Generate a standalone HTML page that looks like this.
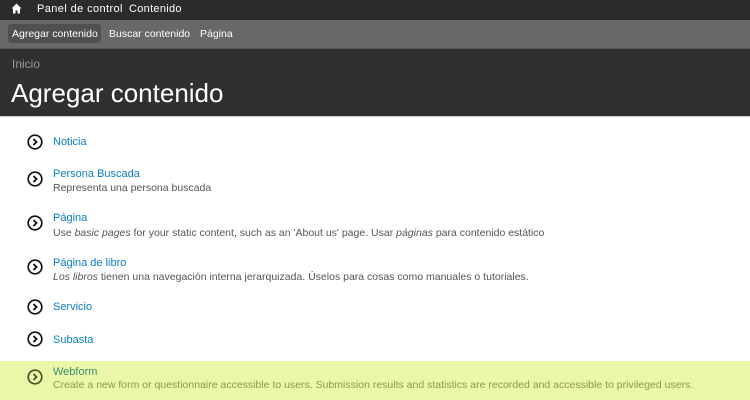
<!DOCTYPE html>
<html><head><meta charset="utf-8"><style>
body{margin:0;width:750px;height:400px;overflow:hidden;background:#fff;font-family:"Liberation Sans",sans-serif;position:relative}
.a{position:absolute;white-space:nowrap}
.t{font-size:11px;color:#0a7ebf}
.d{font-size:10.5px;color:#555}
svg.i{position:absolute;width:16px;height:16px}
</style></head><body>
<div class="a" style="left:0;top:0;width:750px;height:20px;background:#2b2b2b"></div>
<div class="a" style="left:0;top:20px;width:750px;height:28px;background:#686868;border-bottom:1px solid #555"></div>
<div class="a" style="left:0;top:49px;width:750px;height:67px;background:#303030;border-bottom:1px solid #ccc"></div>
<svg class="a" style="left:11px;top:3px" width="11" height="11" viewBox="0 0 11 11"><path d="M5.5 0.5L0.5 5.5H2V10.5H4.5V7.5H6.5V10.5H9V5.5H10.5Z" fill="#fff"/></svg>
<div class="a" style="left:37px;top:3px;font-size:11px;color:#fff;letter-spacing:0.4px">Panel de control</div>
<div class="a" style="left:129px;top:3px;font-size:11px;color:#fff;letter-spacing:0.3px">Contenido</div>
<div class="a" style="left:8px;top:24px;width:93px;height:19px;background:#505050;border-radius:3px"></div>
<div class="a" style="left:12px;top:28px;font-size:10.5px;color:#fff">Agregar contenido</div>
<div class="a" style="left:109px;top:28px;font-size:10.5px;color:#fff">Buscar contenido</div>
<div class="a" style="left:200px;top:28px;font-size:10.5px;color:#fff">Página</div>
<div class="a" style="left:12px;top:57px;font-size:12px;color:#999">Inicio</div>
<div class="a" style="left:11px;top:78px;font-size:26px;color:#fff">Agregar contenido</div>
<div class="a" style="left:0;top:361px;width:750px;height:39px;background:#eaf6a8"></div>

<svg class="i" style="left:27px;top:134px" viewBox="0 0 16 16"><circle cx="8" cy="8" r="6.8" fill="none" stroke="#111" stroke-width="1.7"/><path d="M6.5 5L9.5 8L6.5 11" fill="none" stroke="#111" stroke-width="1.8"/></svg>
<div class="a t" style="left:53px;top:136px">Noticia</div>

<svg class="i" style="left:27px;top:171px" viewBox="0 0 16 16"><circle cx="8" cy="8" r="6.8" fill="none" stroke="#111" stroke-width="1.7"/><path d="M6.5 5L9.5 8L6.5 11" fill="none" stroke="#111" stroke-width="1.8"/></svg>
<div class="a t" style="left:53px;top:168px">Persona Buscada</div>
<div class="a d" style="left:53px;top:182px">Representa una persona buscada</div>

<svg class="i" style="left:27px;top:215px" viewBox="0 0 16 16"><circle cx="8" cy="8" r="6.8" fill="none" stroke="#111" stroke-width="1.7"/><path d="M6.5 5L9.5 8L6.5 11" fill="none" stroke="#111" stroke-width="1.8"/></svg>
<div class="a t" style="left:53px;top:212px">Página</div>
<div class="a d" style="left:53px;top:227px">Use <i>basic pages</i> for your static content, such as an 'About us' page. Usar <i>páginas</i> para contenido estático</div>

<svg class="i" style="left:27px;top:259px" viewBox="0 0 16 16"><circle cx="8" cy="8" r="6.8" fill="none" stroke="#111" stroke-width="1.7"/><path d="M6.5 5L9.5 8L6.5 11" fill="none" stroke="#111" stroke-width="1.8"/></svg>
<div class="a t" style="left:53px;top:257px">Página de libro</div>
<div class="a d" style="left:53px;top:271px"><i>Los libros</i> tienen una navegación interna jerarquizada. Úselos para cosas como manuales o tutoriales.</div>

<svg class="i" style="left:27px;top:299px" viewBox="0 0 16 16"><circle cx="8" cy="8" r="6.8" fill="none" stroke="#111" stroke-width="1.7"/><path d="M6.5 5L9.5 8L6.5 11" fill="none" stroke="#111" stroke-width="1.8"/></svg>
<div class="a t" style="left:53px;top:301px">Servicio</div>

<svg class="i" style="left:27px;top:331px" viewBox="0 0 16 16"><circle cx="8" cy="8" r="6.8" fill="none" stroke="#111" stroke-width="1.7"/><path d="M6.5 5L9.5 8L6.5 11" fill="none" stroke="#111" stroke-width="1.8"/></svg>
<div class="a t" style="left:53px;top:334px">Subasta</div>

<svg class="i" style="left:27px;top:369px" viewBox="0 0 16 16"><circle cx="8" cy="8" r="6.8" fill="none" stroke="#4a5220" stroke-width="1.7"/><path d="M6.5 5L9.5 8L6.5 11" fill="none" stroke="#4a5220" stroke-width="1.8"/></svg>
<div class="a t" style="left:53px;top:366px;color:#3a8f6a">Webform</div>
<div class="a d" style="left:53px;top:379px;color:#8a9a50">Create a new form or questionnaire accessible to users. Submission results and statistics are recorded and accessible to privileged users.</div>
</body></html>
